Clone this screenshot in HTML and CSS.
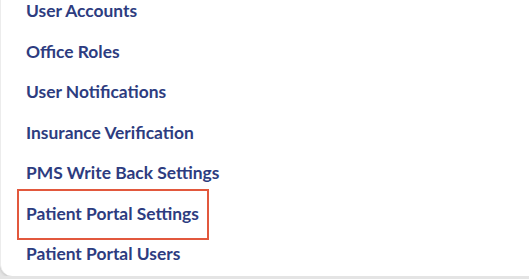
FILE: index.html
```html
<!DOCTYPE html>
<html lang="en">
  <head>
    <meta charset="UTF-8" />
    <meta name="viewport" content="width=device-width, initial-scale=1.0" />
    <title>Settings</title>
    <link rel="stylesheet" href="styles.css">
  </head>
  <body>
    <div class="panel">
      <ul class="settings-menu">
        <li><a href="javascript:void(0)">User Accounts</a></li>
        <li><a href="javascript:void(0)">Office Roles</a></li>
        <li><a href="javascript:void(0)">User Notifications</a></li>
        <li><a href="javascript:void(0)">Insurance Verification</a></li>
        <li><a href="javascript:void(0)">PMS Write Back Settings</a></li>
        <li class="active"><a href="javascript:void(0)">Patient Portal Settings</a></li>
        <li><a href="javascript:void(0)">Patient Portal Users</a></li>
      </ul>
    </div>
  </body>
</html>
```

FILE: styles.css
```css
body {
  margin: 0;
  background-color: #e4e4e4;
  font-family: Lato, "Noto Sans", sans-serif;
  overflow: hidden;
}
.panel {
  background-color: #fff;
  border-left: 1px solid #ececec;
  border-radius: 0 0 0 12px;
  height: 276px;
  box-shadow: 0 1px 3px rgba(0, 0, 0, 0.15);
  overflow: hidden;
}
.settings-menu {
  list-style: none;
  margin: -9px 0 0;
  padding: 0 0 0 25px;
}
.settings-menu > li {
  height: 40.5px;
  line-height: 40.5px;
}
.settings-menu > li > a {
  display: inline-block;
  position: relative;
  color: #2d3c80;
  font-size: 17.4px;
  font-weight: 700;
  text-decoration: none;
}
.settings-menu > li.active > a::after {
  content: "";
  position: absolute;
  top: -5px;
  bottom: -6px;
  left: -9px;
  right: -10px;
  border: 2px solid #e2583d;
}
```
